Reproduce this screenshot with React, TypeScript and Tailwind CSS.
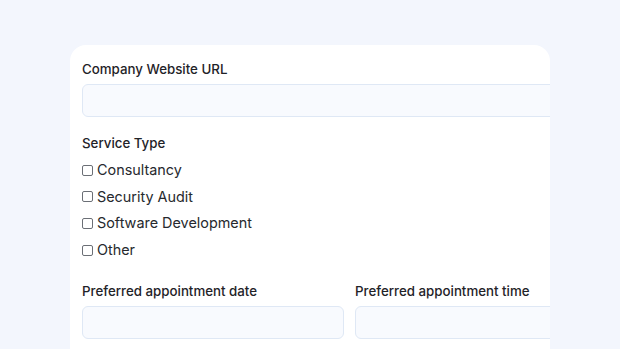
import React from 'react';

const services = ['Consultancy', 'Security Audit', 'Software Development', 'Other'];

const App: React.FC = () => {
    return (
        <div className="h-[349px] w-[620px] overflow-hidden bg-[#f3f6fd] pt-[45px] pl-[70px]" style={{ fontFamily: 'Inter, Lato, sans-serif' }}>
            <div className="h-[340px] w-[480px] overflow-hidden rounded-t-2xl bg-white pl-3 pt-[14px]">
                <div className="w-[535px]">
                    <label className="block text-[13.3px] font-medium leading-5 text-[#1f2328]">Company Website URL</label>
                    <div className="mt-[5px] h-[33px] w-full rounded-md border border-[#dfe8f5] bg-[#f8fafe]" />

                    <p className="mt-[16px] text-[13.3px] font-medium leading-5 text-[#1f2328]">Service Type</p>
                    <ul className="mt-[7px] space-y-[6.7px]">
                        {services.map(s => (
                            <li key={s} className="flex h-5 items-center gap-[4px]">
                                <span className="h-[11px] w-[11px] rounded-[2px] border border-[#6b6f76] bg-white" />
                                <span className="text-[14.4px] leading-5 text-[#26292e]">{s}</span>
                            </li>
                        ))}
                    </ul>

                    <div className="mt-[21px] grid grid-cols-2 gap-[11px]">
                        <div>
                            <label className="block text-[13.3px] font-medium leading-5 text-[#1f2328]">Preferred appointment date</label>
                            <div className="mt-[5px] h-[33px] rounded-md border border-[#dfe8f5] bg-[#f8fafe]" />
                        </div>
                        <div>
                            <label className="block text-[13.3px] font-medium leading-5 text-[#1f2328]">Preferred appointment time</label>
                            <div className="mt-[5px] h-[33px] rounded-md border border-[#dfe8f5] bg-[#f8fafe]" />
                        </div>
                    </div>
                </div>
            </div>
        </div>
    );
};

export default App;
